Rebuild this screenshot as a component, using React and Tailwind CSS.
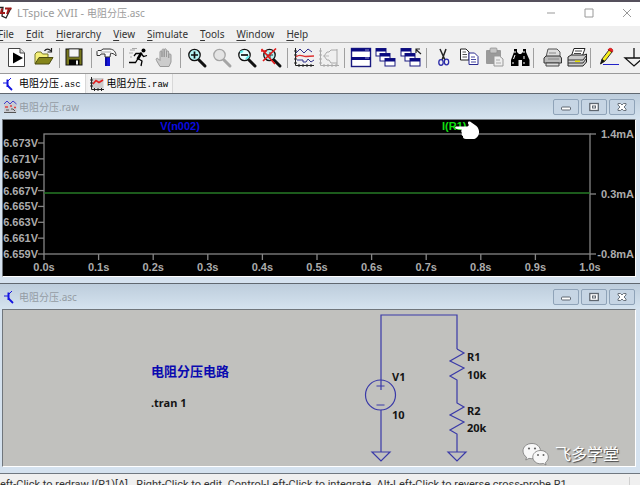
import React from "react";
import clsx from "clsx";

const MENUS = ["File", "Edit", "Hierarchy", "View", "Simulate", "Tools", "Window", "Help"];

const V_TICKS = ["6.673V", "6.671V", "6.669V", "6.667V", "6.665V", "6.663V", "6.661V", "6.659V"];
const T_TICKS = ["0.0s", "0.1s", "0.2s", "0.3s", "0.4s", "0.5s", "0.6s", "0.7s", "0.8s", "0.9s", "1.0s"];
const I_TICKS = ["1.4mA", "0.3mA", "-0.8mA"];

const Lens = ({ color = "#111", glass = "#e8ffff" }) => (
  <>
    <path d="M12 12 L18 18" stroke={color} strokeWidth="3" strokeLinecap="round" />
    <circle cx="7.5" cy="7" r="5.7" fill={glass} stroke={color} strokeWidth="1.3" />
  </>
);

const Cascade = () => (
  <>
    {[[0, 0.5], [4, 5.5], [9, 10.5]].map(([x, y]) => (
      <g key={x}>
        <rect x={x} y={y} width="10" height="7.5" fill="#fff" stroke="#1a1a80" />
        <rect x={x} y={y} width="10" height="3" fill="#0a0a80" />
      </g>
    ))}
  </>
);

// toolbar drawings, all on a 20x20 grid
const ICONS = {
  Run: (
    <>
      <path d="M-.5 .5 H11 L15.5 5 V18.5 H-.5 Z" fill="#fff" stroke="#444" />
      <path d="M11 .5 V5 H15.5" fill="#ddd" stroke="#444" />
      <path d="M4 4.5 L14 10 L4 15.5 Z" fill="#000" />
    </>
  ),
  Open: (
    <>
      <path d="M1 15.5 V6 L3 4 H7 L8.5 6 H14 V9" fill="#f5f07a" stroke="#77772a" />
      <path d="M1 16 L5 9.5 H19 L15 16 Z" fill="#85851a" stroke="#4b4b10" />
      <path d="M10.5 3 C12 .5 15 .5 17 3 M17.5 0 V4 H13.5" fill="none" stroke="#222" strokeWidth="1.2" />
    </>
  ),
  Save: (
    <>
      <rect x="0" y="1" width="16" height="16" fill="#77771c" stroke="#111" />
      <rect x="3" y="1" width="10" height="8" fill="#f4f4f4" stroke="#333" strokeWidth=".7" />
      <rect x="3" y="11.5" width="10.5" height="5.5" fill="#050505" />
      <rect x="10" y="12.5" width="2" height="4" fill="#eee" />
    </>
  ),
  Hammer: (
    <>
      <path d="M7 9 H12 V18 H7 Z" fill="#1414d8" />
      <path d="M8 9 V18" stroke="#00007a" />
      <path
        d="M0 2.5 H3 L5 1 H12 C16 1.5 18 4 18 8 C16 5.5 14 5 12.5 5.5 L12 9 H7 V6 L3 6 L2 7.5 H-1 V3.5 Z"
        fill="#fafafa"
        stroke="#333"
      />
      <path d="M2.5 4 H13" stroke="#aaa" />
    </>
  ),
  Runner: (
    <>
      <circle cx="13.5" cy="2.5" r="2" fill="#000" />
      <path d="M11 5.5 L8 10.5" stroke="#000" strokeWidth="2.6" strokeLinecap="round" />
      <path
        d="M11 5.5 L6 5.5 L4 8 M11.5 6 L13.5 8.5 L17 7.5 M8 10.5 L12 13 L11 18 M8 10.5 L5.5 14.5 L-1 14.5"
        fill="none"
        stroke="#000"
        strokeWidth="1.3"
      />
      <path d="M0 2 H5 M-1 5 H3 M0 9 H2 M2 .5 H7" stroke="#888" strokeWidth=".7" />
    </>
  ),
  Halt: (
    <path
      d="M5 18.5 L1.5 12.5 C.5 10.5 2 9.5 3.5 11 L5 12.5 V4 C5 2.5 7 2.5 7 4 V9 V2.5 C7 .5 9.2 .5 9.2 2.5 V9 V2 C9.2 .3 11.5 .3 11.5 2.5 V9 V4 C11.5 2.5 13.7 2.5 13.7 4 V10 V7 C13.7 5.5 16 5.5 16 7 V14 L14 18.5 Z"
      fill="#ccc"
      stroke="#999"
    />
  ),
  "Zoom in": (
    <>
      <Lens glass="#b4f4f4" />
      <path d="M4 7 H11 M7.5 3.5 V10.5" stroke="#111" strokeWidth="1.7" />
    </>
  ),
  Pan: <Lens color="#a5a5a5" glass="#e4e4e4" />,
  "Zoom out": (
    <>
      <Lens />
      <path d="M3 4.5 L6 3 M9 11 L12 8" stroke="#5eeaea" strokeWidth="2" />
      <path d="M4 7 H11" stroke="#111" strokeWidth="1.7" />
    </>
  ),
  "Zoom to fit": (
    <>
      <Lens glass="#b8f0f0" />
      <path d="M5 7 H11 M8 4 V10" stroke="#333" />
      <path d="M-.5 1 L13 16 M14 .5 L1 13 M-1 3 H5" stroke="#e31818" strokeWidth="1.7" />
    </>
  ),
  Autorange: (
    <>
      <path
        d="M1.5 0 V17.5 H20 M0 3 H3 M0 7 H3 M0 11 H3 M0 15 H3 M5 16 V19 M9 16 V19 M13 16 V19 M17 16 V19"
        fill="none"
        stroke="#222"
      />
      <path d="M2 5 L6 1 L10 5 L14 1 L18 4" fill="none" stroke="#33338a" />
      <path d="M2 9 C6 5 9 9 12 8.5 S16 8 20 8" fill="none" stroke="#d33" strokeWidth="1.4" />
      <path d="M3 12 H9 V14 H12 L14 11 L17 14 L20 12" fill="none" stroke="#33338a" />
    </>
  ),
  "Eye diagram": (
    <>
      <path
        d="M1.5 0 V17.5 H20 M0 3 H3 M0 7 H3 M0 11 H3 M0 15 H3 M5 16 V19 M9 16 V19 M13 16 V19 M17 16 V19 M18 1 V17"
        fill="none"
        stroke="#aaa"
      />
      <path d="M18 2 H12 L10 4 H8 L5 8 L8 12 H10 L12 15 H18" fill="none" stroke="#aaa" />
      <path d="M4 8 H10" stroke="#bbb" />
    </>
  ),
  Tile: (
    <>
      <rect x=".5" y=".5" width="19" height="18" fill="#fff" stroke="#1a1a80" strokeWidth="1.4" />
      <path d="M0 2 H20 M0 10.5 H20" stroke="#0a0a80" strokeWidth="3" />
      <path d="M14 2 H18 M14 10 H18" stroke="#ccccee" strokeWidth=".7" />
    </>
  ),
  Cascade: <Cascade />,
  "Close all": (
    <>
      <Cascade />
      <path d="M20 6 L15 1.5 M15 5 V1 H19" fill="none" stroke="#222" strokeWidth="1.2" />
    </>
  ),
  Cut: (
    <>
      <path d="M7 1 L12 12 M13 1 L9 12" stroke="#222" strokeWidth="1.5" />
      <ellipse cx="8" cy="14.5" rx="2.2" ry="2.8" fill="none" stroke="#2a2aa8" strokeWidth="1.3" />
      <ellipse cx="13.5" cy="14" rx="2.2" ry="2.8" fill="none" stroke="#2a2aa8" strokeWidth="1.3" />
    </>
  ),
  Copy: (
    <>
      <path d="M2.5 1 H8 L11 4 V12 H2.5 Z" fill="#fff" stroke="#222" />
      <path d="M4.5 4 H8 M4.5 6.5 H9 M4.5 9 H9" stroke="#555" />
      <path d="M11 5 H16.5 L20 8.5 V16.5 H11 Z" fill="#fff" stroke="#2a2a90" />
      <path d="M13 9 H17 M13 11.5 H18 M13 14 H18" stroke="#4a4aa0" />
    </>
  ),
  Paste: (
    <>
      <rect x="3" y="2" width="15" height="14" rx="1" fill="#9a9a9a" />
      <rect x="7" y="0" width="7" height="5" rx="1" fill="#c5c5c5" stroke="#8a8a8a" strokeWidth=".7" />
      <path d="M11 8 H16.5 L20 11 V18 H11 Z" fill="#eee" stroke="#999" />
      <path d="M13 12 H17 M13 15 H18" stroke="#aaa" />
    </>
  ),
  Find: (
    <>
      <path d="M6 1 H9 V4 L11 6 H13 L15 4 V1 H18 V4 L21.5 12 V18 H14 V12 H10.5 V18 H3 V12 L6 4 Z" fill="#000" />
      <path d="M7 3 V5 M16 3 V5 M5.5 11 L7 7 M16 11 V8 M5 14 V16 M16 14 V16" stroke="#fff" />
    </>
  ),
  Print: (
    <>
      <path d="M6 9 L8 1 H17 L20 4 V10" fill="#ddd" stroke="#555" />
      <path d="M4 10 L6 8 H20 L21.5 10 V15 H4 Z" fill="#b9b9b9" stroke="#333" />
      <path d="M6 15 H19 V18 H6 Z" fill="#ddd" stroke="#444" />
      <path d="M9 5 H16 M8 11 H19" stroke="#888" />
    </>
  ),
  "Print setup": (
    <>
      <path d="M6 9 L9 .5 H20 L17 9 Z" fill="#fff" stroke="#222" />
      <path d="M10 3 H17 M9 5.5 H16" stroke="#444" />
      <path d="M3 9 L6 7 H19 L21.5 6 V14 L18 18 H3 Z" fill="#ccc" stroke="#222" />
      <path d="M3 12 H18 L21 8 M3 15 H18 L21 11" fill="none" stroke="#333" />
      <rect x="10" y="12.5" width="5" height="1.5" fill="#e6e000" />
    </>
  ),
  Wire: (
    <>
      <path d="M12 2 L5 11 L3.5 16 L8 13 L15 4 Z" fill="#f7f01c" stroke="#333" />
      <path d="M11 2 C12 -1 17 0 15.5 4 Z" fill="#f02020" stroke="#a00" strokeWidth=".6" />
      <path d="M5 11 L3.5 16 L8 13 Z" fill="#111" />
      <path d="M6 16.5 H22" stroke="#2323c8" />
    </>
  ),
  Ground: (
    <>
      <path d="M12 0 V10" stroke="#111" strokeWidth="1.3" />
      <path d="M3 10 H21 L12 18 Z" fill="none" stroke="#111" strokeWidth="1.3" />
    </>
  ),
};

const TOOL_GROUPS = [
  ["Run", "Open"],
  ["Save"],
  ["Hammer"],
  ["Runner", "Halt"],
  ["Zoom in", "Pan", "Zoom out", "Zoom to fit"],
  ["Autorange", "Eye diagram"],
  ["Tile", "Cascade", "Close all"],
  ["Cut", "Copy", "Paste", "Find"],
  ["Print", "Print setup"],
  ["Wire", "Ground"],
];

const AscIcon = () => (
  <svg className="h-3.5 w-3.5 shrink-0" viewBox="0 0 14 14" fill="none" stroke="#1414e0">
    <path d="M1 6 H5 M9 1 L5.5 4.5" strokeWidth="1" />
    <path d="M5.5 2.5 V10" strokeWidth="2" />
    <path d="M5.5 8.5 L10 13" strokeWidth="1.8" />
  </svg>
);

const RawIcon = () => (
  <svg className="h-3.5 w-3.5 shrink-0" viewBox="0 0 14 14" fill="none">
    <rect x="2" y="1" width="11.5" height="10.5" fill="#ccc" />
    <path d="M1.5 0 V12.5 H14 M0 3 H3 M0 6 H3 M0 9 H3 M4.5 11 V14 M8 11 V14 M11.5 11 V14" stroke="#222" />
    <path d="M3 7 L6 3.5 L9 5.5 L13 3" stroke="#e02020" strokeWidth="1.6" />
  </svg>
);

const WaveIcon = () => (
  <svg className="h-3.5 w-3.5 shrink-0" viewBox="0 0 14 14" fill="none">
    <rect x="1" y="1" width="12.5" height="12" fill="#c9cbd2" />
    <path d="M1 4 L4 1 L7 4 L10 1 L13.5 4" stroke="#4040d0" />
    <path d="M2 7 H5 M7 6 H9 M11 7.5 H13" stroke="#e04040" strokeWidth="1.4" />
    <path d="M1 12.5 H13 M3 10 H6 M8 9 H10 L12 11" stroke="#555" />
  </svg>
);

function MdiWindow({ title, icon, children }) {
  return (
    <section className="border-t border-[#606870] bg-[#d5e2ef] pb-1.5">
      <header className="flex h-[25px] items-center gap-0.5 bg-linear-to-b from-[#bdcddc] to-[#d5e3ef] pl-[3px] pr-[5px]">
        {icon}
        <h2 className="flex-1 text-[10px] leading-4 text-[#949ca4]">{title}</h2>
        <div className="flex gap-0.5">
          {["Minimize", "Restore", "Close"].map((name) => (
            <button
              key={name}
              aria-label={name}
              className="flex h-4 w-[26px] items-center justify-center rounded-xs border border-[#8fa3b8] bg-[#c6d5e4]"
            >
              <svg className="h-2.5 w-2.5" viewBox="0 0 10 10" fill="#fff" stroke="#5e6670">
                {name === "Minimize" && <rect x=".5" y="5" width="9" height="3" rx="1" />}
                {name === "Restore" && (
                  <>
                    <rect x=".8" y="1.5" width="8.5" height="7" strokeWidth="1.3" />
                    <rect x="3.5" y="4" width="3" height="2" />
                  </>
                )}
                {name === "Close" && (
                  <path
                    d="M1 1.5 H3.5 L5 3 L6.5 1.5 H9 V3 L7 5 L9 7 V8.5 H6.5 L5 7 L3.5 8.5 H1 V7 L3 5 L1 3 Z"
                    strokeWidth=".9"
                  />
                )}
              </svg>
            </button>
          ))}
        </div>
      </header>
      <div className="ml-0.5 mr-1 border border-t-[#70767c] border-l-[#70767c] border-b-white border-r-white">
        {children}
      </div>
    </section>
  );
}

function Waveform() {
  const left = 41;
  const right = 587;
  const top = 14;
  const bottom = 134;
  const dx = (right - left) / 10;

  return (
    <svg className="block w-full bg-black font-['Liberation_Sans'] text-[11px] font-bold" viewBox="0 0 632 156">
      <g stroke="#858585" strokeWidth="1.3" fill="none">
        <rect x={left} y={top} width={right - left} height={bottom - top} />
        {V_TICKS.map((t, i) => (
          <path key={t} d={`M${left - 6} ${23 + i * 15.86} H${left}`} />
        ))}
        {T_TICKS.map((t, i) => (
          <path key={t} d={`M${left + i * dx} ${bottom} V${bottom + 6}`} />
        ))}
        {I_TICKS.map((t, i) => (
          <path key={t} d={`M${right} ${top + i * 60} H${right + 6}`} />
        ))}
      </g>
      <path d={`M${left} 73 H${right}`} stroke="#267a26" strokeWidth="1.5" />
      <g fill="#acacac">
        {V_TICKS.map((t, i) => (
          <text key={t} x="35" y={27 + i * 15.86} textAnchor="end">{t}</text>
        ))}
        {T_TICKS.map((t, i) => (
          <text key={t} x={left + i * dx} y="151" textAnchor="middle">{t}</text>
        ))}
        {I_TICKS.map((t, i) => (
          <text key={t} x="631" y={18 + i * 60} textAnchor="end">{t}</text>
        ))}
      </g>
      <text x="177" y="10" textAnchor="middle" fill="#0a0ae0">V(n002)</text>
      <text x="439" y="10" fill="#10e010">I(R1)</text>
      {/* hand pointer over the trace label */}
      <path
        d="M453 6.5 C451.5 7 452 9 454 9 L459 9.5 C458 10.5 458 12 459 13 C458 14.5 459 16 460 16 C459.5 18 461 19 463 19 H471 C474 18.5 476.5 15 476 11 C475.5 8 474 6 472 5 L467 1.5 C464.5 1 464.5 3.5 466 5 L464.5 6.5 Z"
        fill="#fff"
      />
    </svg>
  );
}

function Schematic() {
  const zigzag = "l7 4 l-14 8 l14 7 l-14 8 l7 4";

  return (
    <svg className="block w-full bg-[#c1c1be] font-['Noto_Sans'] text-[11px] font-bold" viewBox="0 0 632 156">
      <g stroke="#3a3aa8" strokeWidth="1.2" fill="none">
        <path d="M378 142 V5 H454 V39" />
        <path d={`M454 39 ${zigzag} V93 ${zigzag} V142`} />
        <circle cx="377.5" cy="85" r="15" fill="#c1c1be" />
        <path d="M373.5 76 H381.5 M378 70 V80 M373.5 95 H381.5" />
        <path d="M369 142 H387 L378 151 Z M445 142 H463 L454 151 Z" />
      </g>
      <g fill="#141414">
        <text x="389" y="71">V1</text>
        <text x="389" y="109">10</text>
        <text x="464" y="51">R1</text>
        <text x="464" y="69">10k</text>
        <text x="464" y="105">R2</text>
        <text x="464" y="122">20k</text>
        <text x="148" y="97">.tran 1</text>
      </g>
      <text x="148" y="66" fill="#0a0ab0" className="font-['Noto_Sans_CJK_SC'] text-[13px]">电阻分压电路</text>
    </svg>
  );
}

function Watermark() {
  return (
    <div className="absolute right-4 bottom-0 flex items-center gap-1.5">
      <svg className="h-6 w-[27px]" viewBox="0 0 27 24" fill="#f8f8f8" stroke="#777" strokeWidth=".8">
        <path d="M10 1.5 C4.5 1.5 1 5 1 9 C1 11.5 2.5 14 4.5 15.2 L3.8 18 L7 16.4 C15 18 18.5 13 18.5 9 C18.5 5 15 1.5 10 1.5 Z" />
        <path d="M18.5 8.5 C14 8.5 10.8 11.5 10.8 15 C10.8 19 14.5 22 19 21.8 L21.5 21.5 L24 23 L23.5 20.5 C25.5 19 26.3 17 26.3 15 C26.3 11.5 23 8.5 18.5 8.5 Z" />
        <g fill="#666" stroke="none">
          <circle cx="7" cy="6.5" r="1.1" />
          <circle cx="13" cy="6.5" r="1.1" />
          <circle cx="16" cy="13" r="1" />
          <circle cx="21.5" cy="13" r="1" />
        </g>
      </svg>
      <span className="text-[16px] leading-6 text-white [text-shadow:1px_1px_1px_#444]">飞多学堂</span>
    </div>
  );
}

export default function App() {
  return (
    <div className="flex h-screen flex-col overflow-hidden bg-[#f0f0f0] font-['Noto_Sans','Noto_Sans_CJK_SC',sans-serif] text-[#333]">
      {/* Title bar */}
      <header className="flex h-[26px] shrink-0 items-center border-t-2 border-[#55505c] bg-white pr-2 pb-0.5">
        <svg className="h-3.5 w-3.5" viewBox="0 0 14 14">
          <path d="M0 1.5 H3 L2 10 L6 12 L11 2" fill="none" stroke="#222" strokeWidth="1.3" />
          <path d="M2 2.5 L1 7 H5 M5 2.5 H11.5 M9 2.5 L7 8" fill="none" stroke="#a01818" strokeWidth="2" />
        </svg>
        <h1 className="ml-[3px] flex-1 text-[10px] leading-4 text-[#9c9c9c]">
          <span className="text-[11px]">LTspice XVII - </span>电阻分压.asc
        </h1>
        <div className="flex gap-7">
          {[
            ["Minimize", "M1 5 H9"],
            ["Maximize", "M1 1 H9 V9 H1 Z"],
            ["Close", "M1 1 L9 9 M9 1 L1 9"],
          ].map(([name, d]) => (
            <button key={name} aria-label={name}>
              <svg className="h-2.5 w-2.5" viewBox="0 0 10 10" fill="none" stroke="#999">
                <path d={d} />
              </svg>
            </button>
          ))}
        </div>
      </header>

      {/* Menu */}
      <nav className="-ml-0.5 flex h-4 shrink-0 items-center gap-3 text-[10px] leading-4">
        {MENUS.map((m) => (
          <button key={m}>
            <span className="underline underline-offset-2">{m[0]}</span>
            {m.slice(1)}
          </button>
        ))}
      </nav>

      {/* Toolbar */}
      <div className="flex h-8 shrink-0 items-center border-y border-t-[#b5b5b5] border-b-[#9a9a9a] pl-1.5">
        {TOOL_GROUPS.map((group, g) => (
          <React.Fragment key={group[0]}>
            {g > 0 && <span className="mx-[3px] h-5 w-px shrink-0 bg-[#a0a0a0]" />}
            {group.map((name) => (
              <button key={name} aria-label={name} className="flex w-[25px] shrink-0 justify-center">
                <svg className="h-5 w-5 overflow-visible" viewBox="0 0 20 20" fill="none">
                  {ICONS[name]}
                </svg>
              </button>
            ))}
          </React.Fragment>
        ))}
      </div>

      {/* Document tabs */}
      <div className="flex h-[19px] shrink-0 gap-0.5">
        {["asc", "raw"].map((ext) => (
          <button
            key={ext}
            className={clsx(
              "flex items-center gap-[3px] border-r border-[#d8d8d8] pl-0.5 pr-1 text-[10px] leading-4 text-black",
              ext === "asc" ? "bg-white" : "bg-[#f4f4f4]"
            )}
          >
            {ext === "asc" ? <AscIcon /> : <RawIcon />}
            <span>
              电阻分压<span className="font-['Liberation_Mono'] text-[9px]">.{ext}</span>
            </span>
          </button>
        ))}
      </div>

      <main className="shrink-0">
        <MdiWindow title="电阻分压.raw" icon={<WaveIcon />}>
          <Waveform />
        </MdiWindow>
        <MdiWindow title="电阻分压.asc" icon={<AscIcon />}>
          <div className="relative">
            <Schematic />
            <Watermark />
          </div>
        </MdiWindow>
      </main>

      {/* Status bar */}
      <footer className="flex shrink-0 border-t border-[#707880] pt-[3px]">
        <p className="-ml-1.5 flex-1 whitespace-pre font-['Roboto'] text-[11px] leading-4">
          Left-Click to redraw I(R1)[A].  Right-Click to edit. Control-Left-Click to integrate. Alt-Left-Click to reverse cross-probe R1.
        </p>
        <span className="mr-2.5 w-px bg-[#d0d0d0]" />
      </footer>
    </div>
  );
}
